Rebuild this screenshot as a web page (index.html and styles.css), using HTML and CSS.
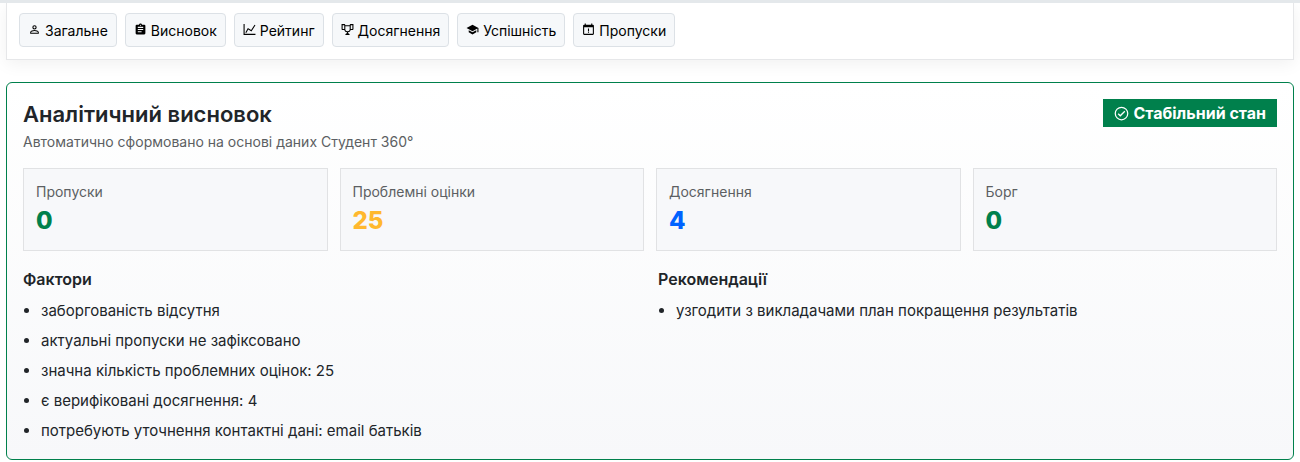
FILE: index.html
```html
<!DOCTYPE html>
<html lang="uk">
    <head>
        <title>Студент 360°</title>
        <meta charset="UTF-8">
        <meta name="viewport" content="width=device-width, initial-scale=1.0">
        <link rel="stylesheet" href="styles.css">
    </head>

    <body>
        <!-- Section navigation -->
        <nav class="tabs">
            <button type="button" class="tab">
                <svg class="icon" viewBox="0 0 24 24"><path d="M12 4a4 4 0 0 1 4 4 4 4 0 0 1-4 4 4 4 0 0 1-4-4 4 4 0 0 1 4-4m0 2a2 2 0 0 0-2 2 2 2 0 0 0 2 2 2 2 0 0 0 2-2 2 2 0 0 0-2-2m0 7c2.670 0 8 1.330 8 4v3H4v-3c0-2.670 5.330-4 8-4m0 1.900c-2.970 0-6.100 1.460-6.100 2.100v1.100h12.200V17c0-.640-3.130-2.100-6.100-2.100z"/></svg>
                Загальне
            </button>
            <button type="button" class="tab">
                <svg class="icon" viewBox="0 0 24 24"><path d="M17 9H7V7h10m0 6H7v-2h10m-3 6H7v-2h7M12 3a1 1 0 0 1 1 1 1 1 0 0 1-1 1 1 1 0 0 1-1-1 1 1 0 0 1 1-1m7 0h-4.180C14.400 1.840 13.300 1 12 1s-2.400.840-2.820 2H5a2 2 0 0 0-2 2v14a2 2 0 0 0 2 2h14a2 2 0 0 0 2-2V5a2 2 0 0 0-2-2z"/></svg>
                Висновок
            </button>
            <button type="button" class="tab">
                <svg class="icon" viewBox="0 0 24 24"><path d="M1 2h2v18h20v2H1zM4.300 17.700 9 9l6 4 6.300-10 1.700 1-7.400 11.700-5.900-3.900-3.600 6.700z"/></svg>
                Рейтинг
            </button>
            <button type="button" class="tab">
                <svg class="icon" viewBox="0 0 24 24"><path d="M18 2c-.900 0-2 1-2 2H8c0-1-1.100-2-2-2H1v9c0 1 1 2 2 2h3.200c.400 2 1.700 3.700 4.800 4v2.080C8 19.540 8 22 8 22h8s0-2.460-3-2.920V17c3.100-.300 4.400-2 4.800-4H21c1 0 2-1 2-2V2zM6 11H3V4h3zm10 .500c0 1.930-.580 3.500-4 3.500-3.410 0-4-1.570-4-3.500V6h8zm5-.500h-3V4h3z"/></svg>
                Досягнення
            </button>
            <button type="button" class="tab">
                <svg class="icon" viewBox="0 0 24 24"><path d="M12 3 1 9l11 6 9-4.910V17h2V9M5 13.180v4L12 21l7-3.820v-4L12 17z"/></svg>
                Успішність
            </button>
            <button type="button" class="tab">
                <svg class="icon" viewBox="0 0 24 24"><path d="M5 1h2v2h10V1h2v2h1a2 2 0 0 1 2 2v15a2 2 0 0 1-2 2H4a2 2 0 0 1-2-2V5a2 2 0 0 1 2-2h1zM4 8v12h16V8zm7 2h2v5h-2zm0 6h2v2h-2z"/></svg>
                Пропуски
            </button>
        </nav>

        <!-- Analytical summary -->
        <section class="summary">
            <header class="summary-header">
                <div>
                    <h1 class="summary-title">Аналітичний висновок</h1>
                    <p class="summary-note">Автоматично сформовано на основі даних Студент 360°</p>
                </div>
                <span class="badge">
                    <svg class="badge-icon" viewBox="0 0 24 24"><path d="M12 1a11 11 0 1 0 0 22 11 11 0 0 0 0-22m0 20a9 9 0 1 1 0-18 9 9 0 0 1 0 18m4.590-13.420L10 14.170l-2.590-2.580L6 13l4 4 8-8z"/></svg>
                    Стабільний стан
                </span>
            </header>

            <div class="stats">
                <div class="stat">
                    <div class="stat-label">Пропуски</div>
                    <div class="stat-value green">0</div>
                </div>
                <div class="stat">
                    <div class="stat-label">Проблемні оцінки</div>
                    <div class="stat-value yellow">25</div>
                </div>
                <div class="stat">
                    <div class="stat-label">Досягнення</div>
                    <div class="stat-value blue">4</div>
                </div>
                <div class="stat">
                    <div class="stat-label">Борг</div>
                    <div class="stat-value green">0</div>
                </div>
            </div>

            <div class="columns">
                <div>
                    <h2 class="column-title">Фактори</h2>
                    <ul class="list">
                        <li>заборгованість відсутня</li>
                        <li>актуальні пропуски не зафіксовано</li>
                        <li>значна кількість проблемних оцінок: 25</li>
                        <li>є верифіковані досягнення: 4</li>
                        <li>потребують уточнення контактні дані: email батьків</li>
                    </ul>
                </div>
                <div>
                    <h2 class="column-title">Рекомендації</h2>
                    <ul class="list">
                        <li>узгодити з викладачами план покращення результатів</li>
                    </ul>
                </div>
            </div>
        </section>
    </body>
</html>
```
FILE: styles.css
```css
* {
    box-sizing: border-box;
}

body {
    margin: 0;
    padding: 0 6px;
    border-top: 3px solid #e4e8eb;
    font-family: Inter, "Noto Sans", sans-serif;
    font-size: 16px;
    line-height: 24px;
    color: #212529;
    background: #fff;
}

h1, h2, p, ul {
    margin: 0;
    padding: 0;
}

/* Tabs */
.tabs {
    display: flex;
    flex-wrap: wrap;
    gap: 8px;
    padding: 10px 12px 12px;
    border: 1px solid #e6e7e9;
    border-top: 0;
    box-shadow: 0 4px 16px rgba(0, 0, 0, 0.06);
}

.tab {
    display: flex;
    align-items: center;
    gap: 4px;
    height: 34px;
    padding: 0 8px;
    border: 1px solid #dce1e6;
    border-radius: 4px;
    background: #f6f8fa;
    color: #000;
    font-family: inherit;
    font-size: 14px;
    font-weight: 400;
    cursor: pointer;
}

.icon {
    width: 13px;
    height: 13px;
    margin-bottom: 2px;
    fill: currentColor;
}

/* Summary card */
.summary {
    margin-top: 22px;
    padding: 16px;
    border: 1px solid #00804c;
    border-radius: 6px;
    background: linear-gradient(#fff, #f7f8fa);
}

.summary-header {
    display: flex;
    justify-content: space-between;
    align-items: flex-start;
    margin-bottom: 16px;
}

.summary-title {
    font-size: 22px;
    font-weight: 600;
    line-height: 30px;
    margin-bottom: 2px;
}

.summary-note {
    font-size: 14px;
    line-height: 21px;
    color: #5c5f62;
}

.badge {
    display: flex;
    align-items: center;
    gap: 4px;
    padding: 2px 11px;
    background: #00804c;
    color: #fff;
    font-weight: 700;
}

.badge-icon {
    width: 15px;
    height: 15px;
    fill: currentColor;
}

.stats {
    display: grid;
    grid-template-columns: repeat(4, 1fr);
    gap: 12px;
    margin-bottom: 16px;
}

.stat {
    padding: 12px 12px 10px;
    border: 1px solid #e1e2e4;
    background: #f7f8fa;
}

.stat-label {
    font-size: 14px;
    line-height: 21px;
    color: #5c5f62;
}

.stat-value {
    font-size: 24px;
    font-weight: 800;
    line-height: 38px;
}

.green {
    color: #00804c;
}

.yellow {
    color: #ffb82e;
}

.blue {
    color: #0062ff;
}

.columns {
    display: grid;
    grid-template-columns: 1fr 1fr;
    gap: 16px;
}

.column-title {
    margin-bottom: 8px;
    font-size: 16px;
    font-weight: 600;
}

.list {
    padding-left: 18px;
    font-size: 15px;
}

.list li + li {
    margin-top: 6px;
}
```
